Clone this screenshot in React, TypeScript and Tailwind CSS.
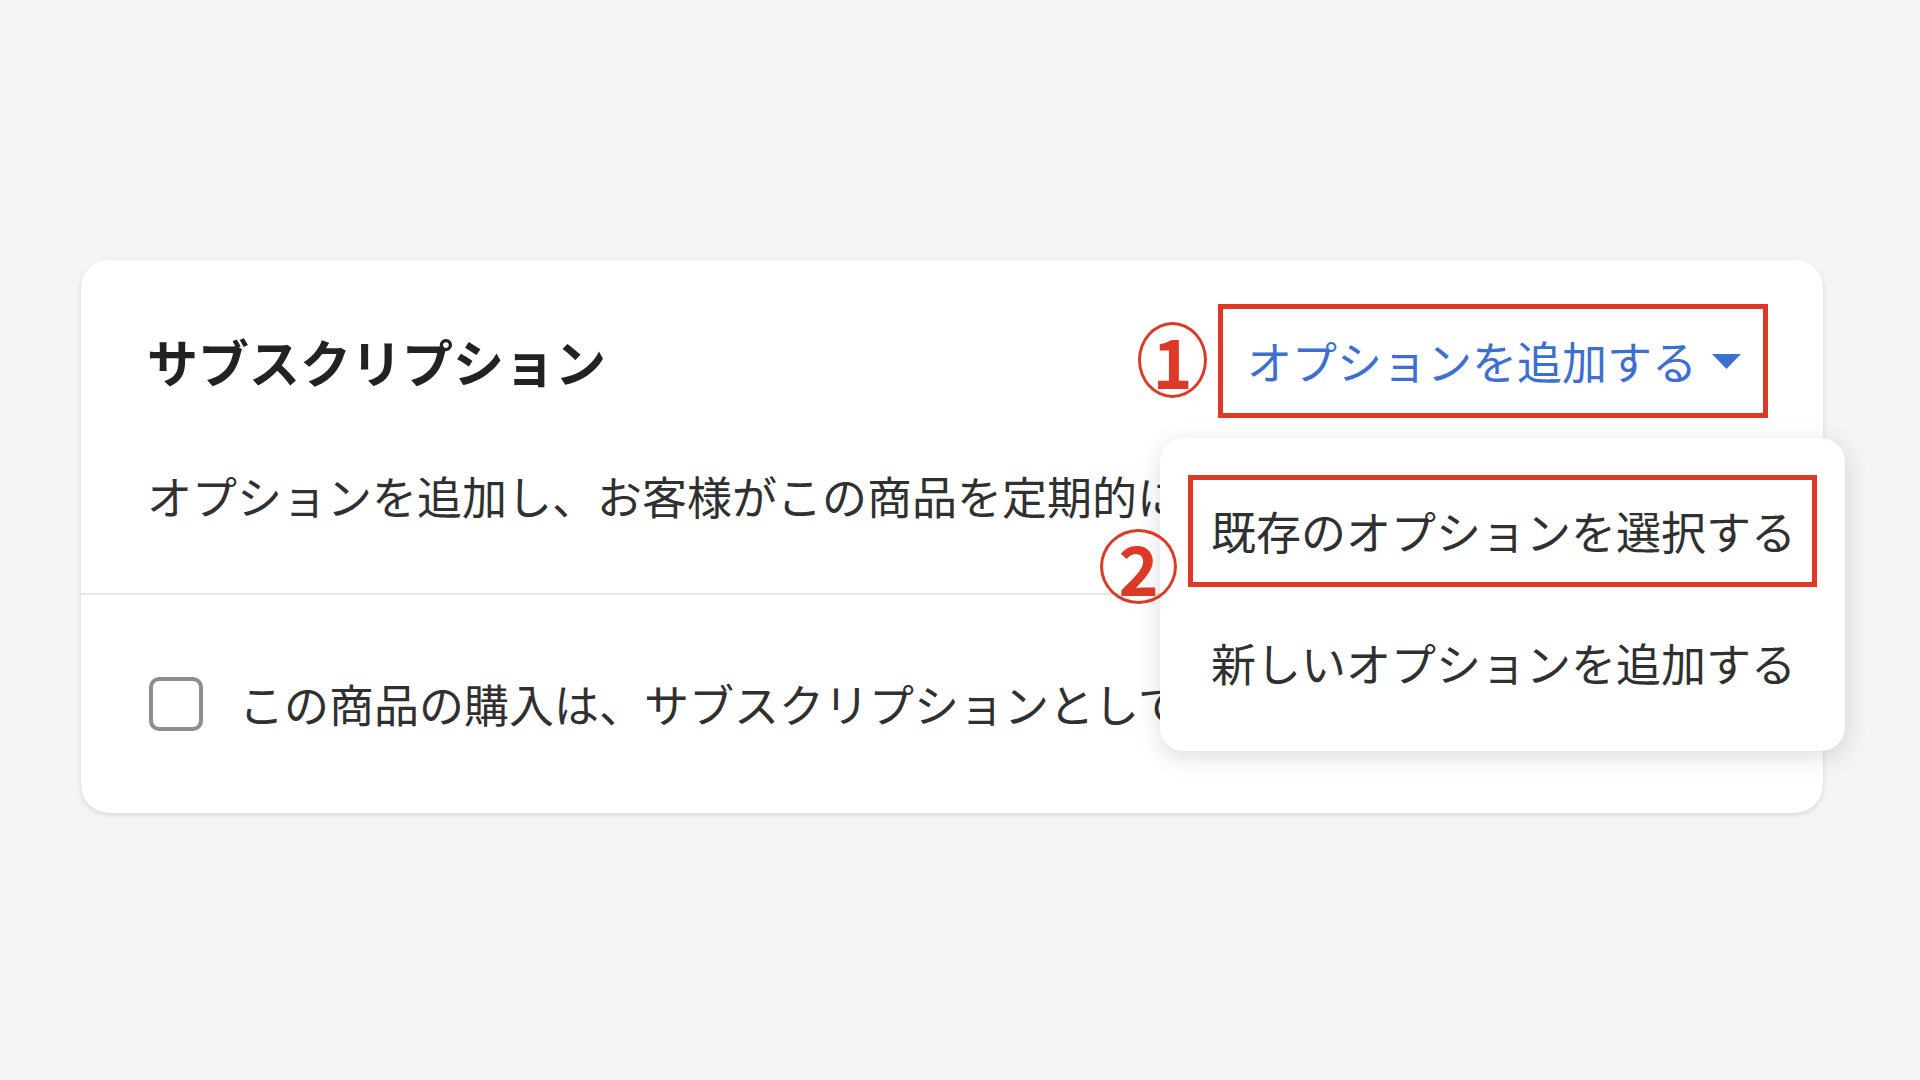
import { ReactNode } from 'react'

const FONT = '"Noto Sans CJK JP", "Noto Sans", sans-serif'

function Marker({ children, className }: { children: ReactNode; className: string }) {
  return (
    <span
      className={`absolute z-20 flex items-center justify-center rounded-[50%] border-[3px] border-[#dc3a27] font-bold text-[#dc3a27] text-[68px] leading-none ${className}`}
    >
      {children}
    </span>
  )
}

export default function App() {
  return (
    <div className="w-[1920px] h-[1080px] bg-[#f4f4f6] pt-[260px] pl-[81px]" style={{ fontFamily: FONT }}>
      <div className="relative w-[1742px] h-[553px] rounded-[28px] bg-white shadow-[0_2px_5px_rgba(0,0,0,0.12)]">
        <div className="pl-[66px] pr-[55px] pt-[44px]">
          <div className="flex items-center justify-between h-[114px]">
            <h2 className="text-[51px] font-bold text-[#202223] leading-none">サブスクリプション</h2>
            <button className="flex items-center justify-between w-[550px] h-[114px] border-[5px] border-[#dc3a27] pl-[24px] pr-[22px] text-[#3d6fd0] text-[45px]">
              <span>オプションを追加する</span>
              <svg width="29" height="15" viewBox="0 0 29 15">
                <polygon points="0,0 29,0 14.5,15" fill="#3d6fd0" />
              </svg>
            </button>
          </div>
          <p className="mt-[48px] h-[60px] leading-[60px] text-[45px] text-[#303030] whitespace-nowrap">
            オプションを追加し、お客様がこの商品を定期的に購入できるようにします。
          </p>
        </div>
        <div className="mt-[67px] border-t-2 border-[#e6e6e8]" />
        <div className="flex items-center h-[218px] pl-[68px] gap-[36px]">
          <span className="w-[54px] h-[54px] rounded-[10px] border-[4px] border-[#8a8f95]" />
          <span className="text-[45px] text-[#303030] whitespace-nowrap">この商品の購入は、サブスクリプションとしてのみ可能にする</span>
        </div>

        <Marker className="left-[1057px] top-[62px] w-[69px] h-[76px]">1</Marker>

        <div className="absolute left-[1079px] top-[178px] w-[685px] h-[313px] z-10 rounded-[24px] bg-white shadow-[0_6px_24px_rgba(0,0,0,0.14)] px-[28px] pt-[37px] flex flex-col gap-[20px]">
          <div className="h-[112px] flex items-center border-[5px] border-[#dc3a27] pl-[18px] text-[45px] text-[#303030] whitespace-nowrap">
            既存のオプションを選択する
          </div>
          <div className="h-[112px] flex items-center pl-[23px] text-[45px] text-[#303030] whitespace-nowrap">
            新しいオプションを追加する
          </div>
        </div>

        <Marker className="left-[1019px] top-[269px] w-[77px] h-[75px]">2</Marker>
      </div>
    </div>
  )
}
